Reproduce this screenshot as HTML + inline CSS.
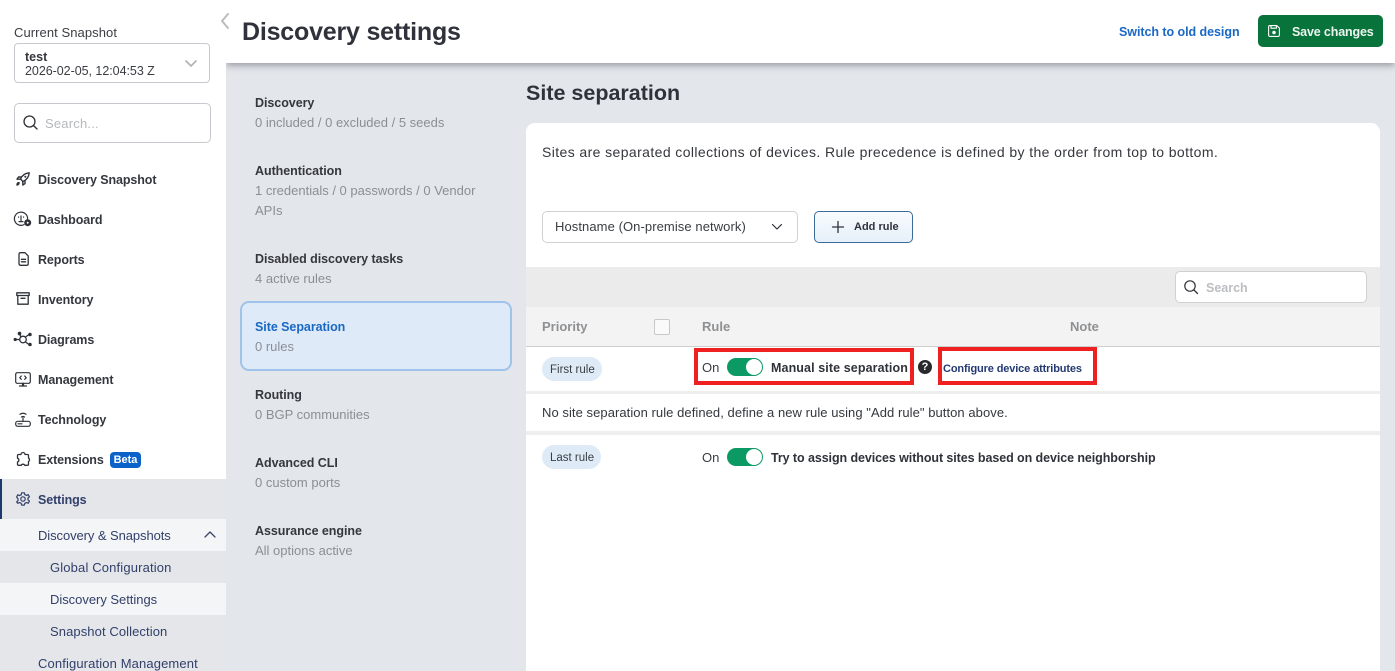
<!DOCTYPE html>
<html lang="en"><head><meta charset="utf-8"><title>Discovery settings</title>
<style>
html,body{margin:0;padding:0;width:1395px;height:671px;overflow:hidden;background:#e3e6ea;font-family:"Liberation Sans",sans-serif;color:#2f3238}
#p{position:relative;width:1395px;height:671px;overflow:hidden;background:#e3e6ea}
.a{position:absolute}
.t{position:absolute;white-space:nowrap;line-height:20px;font-size:13.5px;margin-top:1px}
.b{font-weight:700}
.nav{font-size:12.5px;font-weight:700;color:#34373d;letter-spacing:-.1px}
.sub{font-size:13px;color:#32406b}
.tab{font-size:12.5px;font-weight:700;color:#34373d;letter-spacing:-.05px}
.mut{font-size:13px;color:#8b8f95}
svg{position:absolute;overflow:visible;fill:none;stroke:#2f3238;stroke-linecap:round;stroke-linejoin:round}
.tg{position:absolute;width:36px;height:18px;border-radius:9px;background:#0b9a63}
.tg i{position:absolute;right:1px;top:1px;width:16px;height:16px;border-radius:50%;background:#fff}
.red{position:absolute;border:4px solid #ef2020;box-sizing:border-box}
</style></head><body><div id="p">

<!-- main surfaces -->
<div class="a" style="left:526px;top:123px;width:854px;height:548px;background:#fff;border-radius:9px 9px 0 0"></div>
<div class="a" style="left:226px;top:0;width:1169px;height:63px;background:#fff;box-shadow:0 2px 7px rgba(60,65,75,.5)"></div>

<!-- sidebar -->
<div class="a" style="left:0;top:0;width:226px;height:671px;background:#fff"></div>
<div class="a" style="left:214px;top:5px;width:22px;height:30px;border-radius:50%;background:#fff"></div>
<svg style="left:220px;top:13px" width="10" height="16"><path d="M8 1L2 8l6 7" stroke="#b9bcc1" stroke-width="2"/></svg>
<div class="t" style="left:14px;top:22px;font-size:13px;letter-spacing:.07px;color:#3a3d42">Current Snapshot</div>
<div class="a" style="left:14px;top:43px;width:196px;height:40px;box-sizing:border-box;border:1px solid #c6c9cd;border-radius:4px"></div>
<div class="t b" style="left:25px;top:47px;font-size:12.5px;line-height:18px;color:#34373d">test</div>
<div class="t" style="left:25px;top:61px;font-size:12.5px;line-height:18px;color:#3a3d42;letter-spacing:-.04px">2026-02-05, 12:04:53 Z</div>
<svg style="left:185px;top:60px" width="12" height="8"><path d="M1 1l5 5 5-5" stroke="#aeb1b6" stroke-width="1.6"/></svg>
<div class="a" style="left:14px;top:103px;width:197px;height:40px;box-sizing:border-box;border:1px solid #c6c9cd;border-radius:5px"></div>
<svg style="left:23px;top:115px" width="15" height="16"><circle cx="6.5" cy="6.5" r="5.5" stroke-width="1.3"/><path d="M10.5 10.5l3.5 3.5" stroke-width="1.4"/></svg>
<div class="t" style="left:45px;top:113px;font-size:13px;color:#b6b8bc;letter-spacing:.2px">Search...</div>

<svg style="left:16px;top:172px" width="14" height="14" viewBox="0 0 14 14" stroke-width="1.4"><path d="M4.5 7C6 3.5 9 1.2 13.2.8 12.8 5 10.5 8 7 9.5z"/><path d="M5 5H2.5L1 7.2h3.2M9 9v2.5L6.8 13V9.8"/><path d="M1 13c0-1.5.6-2.3 2-2.4 0 1.4-.6 2.2-2 2.4z" fill="#2f3238"/><circle cx="9.3" cy="4.7" r="1" fill="#2f3238" stroke="none"/></svg>
<div class="t nav" style="left:38px;top:169px">Discovery Snapshot</div>
<svg style="left:14px;top:211px" width="18" height="16" viewBox="0 0 18 16" stroke-width="1.2"><path d="M10 13.6A6.6 6.6 0 1 1 13.6 8"/><path d="M7 5v5M4.6 6v.1M9.6 6v.1M5 10.6h4"/><circle cx="13.7" cy="11.7" r="3.5" fill="#2f3238" stroke="none"/><circle cx="13.7" cy="11.7" r="1" fill="#fff" stroke="none"/></svg>
<div class="t nav" style="left:38px;top:209px">Dashboard</div>
<svg style="left:18px;top:252px" width="11" height="14" viewBox="0 0 11 14" stroke-width="1.3"><path d="M1 2.2A1.5 1.5 0 0 1 2.5.7H7l3.2 3.2v8A1.5 1.5 0 0 1 8.7 13.3H2.5A1.5 1.5 0 0 1 1 11.8z"/><path d="M3.4 7.3h4.2M3.4 9.8h4.2"/></svg>
<div class="t nav" style="left:38px;top:249px">Reports</div>
<svg style="left:16px;top:292px" width="14" height="13" viewBox="0 0 14 13" stroke-width="1.3"><path d="M.8.8h12.4v2.7H.8zM1.8 3.5v8.700h10.400V3.500M5 6.300h4"/></svg>
<div class="t nav" style="left:38px;top:289px">Inventory</div>
<svg style="left:14px;top:332px" width="18" height="15" viewBox="0 0 18 15" stroke-width="1.3"><path d="M5.8 2.200l1 3M11.500 5l3.500-2.500M11.500 10l3.500 2.500M5.700 7.500H2"/><circle cx="9" cy="7.500" r="3.300"/><circle cx="5.500" cy="1.500" r="1.200" fill="#2f3238"/><circle cx="16" cy="2.500" r="1.100" fill="#2f3238"/><circle cx="16" cy="12.500" r="1.100" fill="#2f3238"/><circle cx="1.200" cy="7.500" r="1" fill="#2f3238"/></svg>
<div class="t nav" style="left:38px;top:329px">Diagrams</div>
<svg style="left:15px;top:372px" width="16" height="15" viewBox="0 0 16 15" stroke-width="1.2"><rect x=".7" y=".7" width="14.600" height="10.600" rx="1.500"/><path d="M6.300 4L4.800 5.700l1.500 1.700M9.700 4l1.500 1.700-1.500 1.700M7.500 11.300v2.500M8.500 11.300v2.500M4.500 14h7"/></svg>
<div class="t nav" style="left:38px;top:369px">Management</div>
<svg style="left:15px;top:412px" width="16" height="15" viewBox="0 0 16 15" stroke-width="1.2"><path d="M5 2.300c2-1.400 4-1.400 6 0M6.500 5c1-.7 2-.7 3 0M8 6v3.500"/><rect x=".7" y="9.300" width="14.600" height="5" rx="2"/><path d="M3 11.800h4"/></svg>
<div class="t nav" style="left:38px;top:409px">Technology</div>
<svg style="left:16px;top:452px" width="14" height="14" viewBox="0 0 14 14" stroke-width="1.3"><path d="M5 2.500a2 2 0 0 1 4 0h2.500a1 1 0 0 1 1 1V6a2 2 0 0 1 0 3.500v2.800a1 1 0 0 1-1 1H8.800a2 2 0 0 0-3.600 0H2.500a1 1 0 0 1-1-1V10a2 2 0 0 0 0-3.800V3.500a1 1 0 0 1 1-1z"/></svg>
<div class="t nav" style="left:38px;top:449px">Extensions</div>
<div class="a" style="left:110px;top:452px;width:31px;height:16px;background:#0b63c9;border-radius:4px;color:#fff;font-size:11px;font-weight:700;line-height:16px;text-align:center">Beta</div>

<div class="a" style="left:0;top:479px;width:226px;height:192px;background:#e4e6e9"></div>
<div class="a" style="left:0;top:479px;width:1.500px;height:40px;background:#1b3a6b"></div>
<svg style="left:16px;top:492px;stroke:#32406b" width="14" height="14" viewBox="0 0 14 14" stroke-width="1.200"><path d="M5.700.8h2.600l.5 1.800 1.700.8 1.700-.8 1.200 2.200-1.400 1.200v1.900l1.400 1.200-1.200 2.200-1.700-.8-1.700.8-.5 1.800H5.700l-.5-1.800-1.700-.8-1.700.8L.6 9.900 2 8.700V6.800L.6 5l1.200-2.200 1.700.8 1.700-.8z"/><circle cx="7" cy="7" r="2.200"/></svg>
<div class="t nav" style="left:38px;top:489px;color:#32406b">Settings</div>
<div class="a" style="left:0;top:519px;width:226px;height:32px;background:#f4f5f6"></div>
<div class="t sub" style="left:38px;top:525px;letter-spacing:-.08px">Discovery &amp; Snapshots</div>
<svg style="left:204px;top:531px" width="12" height="7"><path d="M1 6l5-5 5 5" stroke="#3a4568" stroke-width="1.300"/></svg>
<div class="t sub" style="left:50px;top:557px;letter-spacing:.15px">Global Configuration</div>
<div class="a" style="left:0;top:583px;width:226px;height:32px;background:#f4f5f6"></div>
<div class="t sub" style="left:50px;top:589px;letter-spacing:-.03px">Discovery Settings</div>
<div class="t sub" style="left:50px;top:621px;letter-spacing:.09px">Snapshot Collection</div>
<div class="t sub" style="left:38px;top:653px;letter-spacing:.125px">Configuration Management</div>

<!-- header -->
<div class="t b" style="left:242px;top:11px;font-size:25px;line-height:40px;letter-spacing:-.2px;color:#2f323a">Discovery settings</div>
<div class="t b" style="left:1119px;top:21px;font-size:12.5px;color:#1a68c4;letter-spacing:-.05px">Switch to old design</div>
<div class="a" style="left:1258px;top:15px;width:125px;height:32px;background:#08733a;border-radius:5px"></div>
<svg style="left:1268px;top:25px;stroke:#fff" width="12" height="12" viewBox="0 0 12 12" stroke-width="1.100"><path d="M.6 1.800A1.200 1.200 0 0 1 1.800.6h7L11.400 3v7.200a1.200 1.200 0 0 1-1.200 1.200H1.800A1.200 1.200 0 0 1 .6 10.200zM3 .8v2.400h5.400V.8"/><circle cx="6" cy="7.500" r="1.200" fill="#fff"/></svg>
<div class="t b" style="left:1292px;top:21px;font-size:12.5px;color:#eef5f0;letter-spacing:-.15px">Save changes</div>

<!-- section nav -->
<div class="t tab" style="left:255px;top:92px">Discovery</div>
<div class="t mut" style="left:255px;top:112px">0 included / 0 excluded / 5 seeds</div>
<div class="t tab" style="left:255px;top:160px">Authentication</div>
<div class="t mut" style="left:255px;top:180px">1 credentials / 0 passwords / 0 Vendor</div>
<div class="t mut" style="left:255px;top:200px">APIs</div>
<div class="t tab" style="left:255px;top:248px">Disabled discovery tasks</div>
<div class="t mut" style="left:255px;top:268px">4 active rules</div>
<div class="a" style="left:240px;top:301px;width:272px;height:70px;box-sizing:border-box;background:#deeaf7;border:2px solid #9fc3ea;border-radius:9px"></div>
<div class="t tab" style="left:255px;top:316px;color:#1a68c4">Site Separation</div>
<div class="t mut" style="left:255px;top:336px">0 rules</div>
<div class="t tab" style="left:255px;top:384px">Routing</div>
<div class="t mut" style="left:255px;top:404px">0 BGP communities</div>
<div class="t tab" style="left:255px;top:452px">Advanced CLI</div>
<div class="t mut" style="left:255px;top:472px">0 custom ports</div>
<div class="t tab" style="left:255px;top:520px">Assurance engine</div>
<div class="t mut" style="left:255px;top:540px">All options active</div>

<!-- content -->
<div class="t b" style="left:526px;top:74px;font-size:21.5px;line-height:36px;color:#2f323a">Site separation</div>
<div class="t" style="left:542px;top:141px;font-size:14px;color:#34373d;letter-spacing:.4px">Sites are separated collections of devices. Rule precedence is defined by the order from top to bottom.</div>
<div class="a" style="left:542px;top:211px;width:256px;height:32px;box-sizing:border-box;border:1px solid #cfd1d4;border-radius:5px"></div>
<div class="t" style="left:555px;top:216px;font-size:13px;color:#3a3d42;letter-spacing:.08px">Hostname (On-premise network)</div>
<svg style="left:772px;top:224px" width="10" height="6"><path d="M.5.5L5 5 9.500.5" stroke-width="1.200"/></svg>
<div class="a" style="left:814px;top:211px;width:99px;height:32px;box-sizing:border-box;border:1px solid #3d6a98;border-radius:5px;background:linear-gradient(#f8fbfe,#e6f0f9)"></div>
<svg style="left:832px;top:221px" width="12" height="12"><path d="M6 .5v11M.5 6h11" stroke-width="1.300"/></svg>
<div class="t b" style="left:854px;top:216px;font-size:11px;color:#2f323a">Add rule</div>

<div class="a" style="left:526px;top:267px;width:854px;height:40px;background:#ebebeb"></div>
<div class="a" style="left:526px;top:307px;width:854px;height:39px;background:#f3f3f3"></div>
<div class="a" style="left:526px;top:346px;width:854px;height:1px;background:#cfcfcf"></div>
<div class="a" style="left:1175px;top:271px;width:192px;height:32px;box-sizing:border-box;background:#fff;border:1px solid #cfd1d4;border-radius:5px"></div>
<svg style="left:1184px;top:280px" width="15" height="15"><circle cx="6" cy="6" r="5.200" stroke-width="1.200"/><path d="M10 10l3.500 3.500" stroke-width="1.300"/></svg>
<div class="t b" style="left:1206px;top:277px;font-size:12.500px;color:#bcbec1">Search</div>
<div class="t b" style="left:542px;top:316px;font-size:13px;color:#8e9093">Priority</div>
<div class="a" style="left:654px;top:319px;width:16px;height:16px;box-sizing:border-box;background:#fafafa;border:1px solid #c8c8c8;border-radius:2px"></div>
<div class="t b" style="left:702px;top:316px;font-size:13px;color:#8e9093">Rule</div>
<div class="t b" style="left:1070px;top:316px;font-size:13px;color:#8e9093">Note</div>

<div class="a" style="left:526px;top:391px;width:854px;height:3px;background:#eeeeee"></div>
<div class="a" style="left:526px;top:431px;width:854px;height:4px;background:#eeeeee"></div>

<div class="a" style="left:542px;top:357px;width:60px;height:24px;border-radius:12px;background:#deebf7"></div>
<div class="t" style="left:550px;top:359px;font-size:11.500px;color:#3a3d42">First rule</div>
<div class="t" style="left:702px;top:357px;font-size:13px;color:#3a3d42">On</div>
<div class="tg" style="left:727px;top:358px"><i></i></div>
<div class="t b" style="left:771px;top:357px;font-size:12.5px;color:#2f323a;letter-spacing:.1px">Manual site separation</div>
<div class="red" style="left:694px;top:348px;width:220px;height:37px"></div>
<div class="a" style="left:918px;top:360px;width:14px;height:14px;border-radius:50%;background:#27292d;color:#fff;font-size:11px;font-weight:700;line-height:14px;text-align:center">?</div>
<div class="t b" style="left:943px;top:358px;font-size:11px;color:#243a73;letter-spacing:-.13px">Configure device attributes</div>
<div class="red" style="left:938px;top:347px;width:159px;height:38px"></div>

<div class="t" style="left:542px;top:402px;font-size:13px;color:#34373d;letter-spacing:.06px">No site separation rule defined, define a new rule using "Add rule" button above.</div>

<div class="a" style="left:542px;top:445px;width:59px;height:24px;border-radius:12px;background:#deebf7"></div>
<div class="t" style="left:550px;top:447px;font-size:11.500px;color:#3a3d42">Last rule</div>
<div class="t" style="left:702px;top:447px;font-size:13px;color:#3a3d42">On</div>
<div class="tg" style="left:727px;top:448px"><i></i></div>
<div class="t b" style="left:771px;top:447px;font-size:12.5px;color:#2f323a;letter-spacing:-.08px">Try to assign devices without sites based on device neighborship</div>

</div></body></html>
